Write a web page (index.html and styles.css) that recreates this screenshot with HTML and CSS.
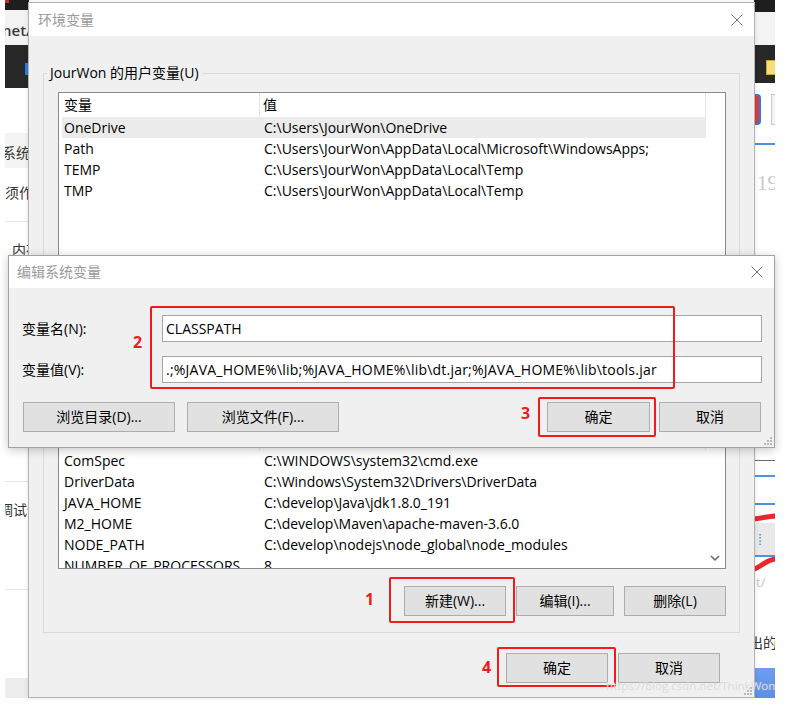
FILE: index.html
```html
<!DOCTYPE html>
<html lang="zh-CN">
<head>
<meta charset="utf-8">
<title>环境变量</title>
<link rel="stylesheet" href="styles.css">
</head>
<body>
<div class="desk">

  <!-- background web page fragments -->
  <div class="strip strip-left">
    <div class="sb dark h10"><i class="tick-red"></i></div>
    <div class="sb light h35"><span class="ftxt pt11 net">net/</span></div>
    <div class="sb dark2 h43"><i class="tick-blue"></i></div>
    <div class="sb h45"></div>
    <div class="sb band h35"><span class="ftxt pt11 sh-2">系统信</span></div>
    <div class="sb h54 rule"><span class="ftxt pt16">须作</span></div>
    <div class="sb h260 rule"><span class="ftxt pt19 sh7">内存</span></div>
    <div class="sb h108 rule"><span class="ftxt pt19 sh-6">调试信</span></div>
    <div class="sb h88"></div>
    <div class="sb band2 h20"></div>
  </div>

  <div class="strip strip-right">
    <div class="sb dark h12"></div>
    <div class="sb light h33"></div>
    <div class="sb dark2 h38"><i class="tick-yellow"></i></div>
    <div class="sb h60 tools"><i class="tool-red"></i><i class="tool-gray"></i></div>
    <div class="sb line-blue"></div>
    <div class="sb h315"><span class="ftxt num19">19</span></div>
    <div class="sb line-dark"></div>
    <div class="sb h14"></div>
    <div class="sb line-blue"></div>
    <div class="sb h26"></div>
    <div class="sb line-blue"></div>
    <div class="sb h18 scrib">
      <svg width="21" height="18" viewBox="0 0 21 18"><path d="M0 14 C6 13 12 12 21 11" stroke="#e8262b" stroke-width="5" fill="none" stroke-linecap="round"/></svg>
    </div>
    <div class="sb h32 graybox"><span class="blue-dots">⁞</span></div>
    <div class="sb line-blue"></div>
    <div class="sb h33 scrib">
      <svg width="21" height="16" viewBox="0 0 21 16"><path d="M0 12 C6 11 10 4 21 2" stroke="#e8262b" stroke-width="5" fill="none" stroke-linecap="round"/></svg>
      <span class="faint">t/</span>
    </div>
    <div class="sb h78"><span class="ftxt pt44 sh-5">出的</span></div>
    <div class="sb bluebar h30"></div>
  </div>

  <!-- 环境变量 window -->
  <section class="win win-env">
    <header class="titlebar">
      <span class="title">环境变量</span>
      <svg class="xbtn" width="12" height="12" viewBox="0 0 12 12"><path d="M0.5 0.5L11.5 11.5M11.5 0.5L0.5 11.5" stroke="#767676" stroke-width="1" fill="none"/></svg>
    </header>
    <div class="win-body env-body">
      <fieldset class="group">
        <legend>JourWon 的用户变量(U)</legend>
        <div class="group-in">
          <div class="listview user-list">
            <div class="lv-cols">
              <div class="lv-head"><span class="c1">变量</span><span class="c2">值</span></div>
              <div class="lv-row sel"><span class="c1">OneDrive</span><span class="c2">C:\Users\JourWon\OneDrive</span></div>
              <div class="lv-row"><span class="c1">Path</span><span class="c2">C:\Users\JourWon\AppData\Local\Microsoft\WindowsApps;</span></div>
              <div class="lv-row"><span class="c1">TEMP</span><span class="c2">C:\Users\JourWon\AppData\Local\Temp</span></div>
              <div class="lv-row"><span class="c1">TMP</span><span class="c2">C:\Users\JourWon\AppData\Local\Temp</span></div>
            </div>
            <div class="vscroll"></div>
          </div>
          <div class="btn-row">
            <button class="btn w102">新建(N)...</button>
            <button class="btn w98">编辑(E)...</button>
            <button class="btn w102">删除(D)</button>
          </div>
        </div>
      </fieldset>

      <fieldset class="group sys-group">
        <legend>系统变量(S)</legend>
        <div class="group-in">
          <div class="listview sys-list">
            <div class="lv-cols">
              <div class="lv-head"><span class="c1">变量</span><span class="c2">值</span></div>
              <div class="lv-row"><span class="c1">ComSpec</span><span class="c2">C:\WINDOWS\system32\cmd.exe</span></div>
              <div class="lv-row"><span class="c1">DriverData</span><span class="c2">C:\Windows\System32\Drivers\DriverData</span></div>
              <div class="lv-row"><span class="c1">JAVA_HOME</span><span class="c2">C:\develop\Java\jdk1.8.0_191</span></div>
              <div class="lv-row"><span class="c1">M2_HOME</span><span class="c2">C:\develop\Maven\apache-maven-3.6.0</span></div>
              <div class="lv-row"><span class="c1">NODE_PATH</span><span class="c2">C:\develop\nodejs\node_global\node_modules</span></div>
              <div class="lv-row"><span class="c1">NUMBER_OF_PROCESSORS</span><span class="c2">8</span></div>
            </div>
            <div class="vscroll">
              <svg width="10" height="6" viewBox="0 0 10 6"><path d="M1 1L5 5L9 1" stroke="#5f5f5f" stroke-width="1.4" fill="none"/></svg>
            </div>
          </div>
          <div class="btn-row">
            <button class="btn w102">新建(W)...</button>
            <button class="btn w98 ml13">编辑(I)...</button>
            <button class="btn w102">删除(L)</button>
          </div>
        </div>
      </fieldset>

      <div class="btn-row foot">
        <button class="btn w102">确定</button>
        <button class="btn w102">取消</button>
      </div>
    </div>
    <svg class="grip" width="8" height="8" viewBox="0 0 8 8" fill="#b9b9b9"><rect x="6" y="0" width="2" height="2"/><rect x="3" y="3" width="2" height="2"/><rect x="6" y="3" width="2" height="2"/><rect x="0" y="6" width="2" height="2"/><rect x="3" y="6" width="2" height="2"/><rect x="6" y="6" width="2" height="2"/></svg>
  </section>

  <!-- 编辑系统变量 dialog -->
  <section class="win win-edit">
    <header class="titlebar">
      <span class="title">编辑系统变量</span>
      <svg class="xbtn" width="12" height="12" viewBox="0 0 12 12"><path d="M0.5 0.5L11.5 11.5M11.5 0.5L0.5 11.5" stroke="#767676" stroke-width="1" fill="none"/></svg>
    </header>
    <div class="win-body edit-body">
      <div class="field-grid">
        <label class="flabel">变量名(N):</label>
        <div class="input">CLASSPATH</div>
        <label class="flabel">变量值(V):</label>
        <div class="input wide">.;%JAVA_HOME%\lib;%JAVA_HOME%\lib\dt.jar;%JAVA_HOME%\lib\tools.jar</div>
      </div>
      <div class="edit-btns">
        <button class="btn w152">浏览目录(D)...</button>
        <button class="btn w152">浏览文件(F)...</button>
        <span class="spacer"></span>
        <button class="btn w103">确定</button>
        <button class="btn w102">取消</button>
      </div>
    </div>
    <svg class="grip" width="8" height="8" viewBox="0 0 8 8" fill="#b9b9b9"><rect x="6" y="0" width="2" height="2"/><rect x="3" y="3" width="2" height="2"/><rect x="6" y="3" width="2" height="2"/><rect x="0" y="6" width="2" height="2"/><rect x="3" y="6" width="2" height="2"/><rect x="6" y="6" width="2" height="2"/></svg>
  </section>

  <!-- red annotations -->
  <div class="anno box2"></div><span class="anno-num n2">2</span>
  <div class="anno box3"></div><span class="anno-num n3">3</span>
  <div class="anno box1"></div><span class="anno-num n1">1</span>
  <div class="anno box4"></div><span class="anno-num n4">4</span>

  <span class="watermark">https://blog.csdn.net/ThinkWon</span>
</div>
</body>
</html>
```

FILE: styles.css
```css
* { box-sizing: border-box; }
html, body { margin: 0; padding: 0; background: #ffffff; }
body {
  font-family: "Open Sans", "Noto Sans CJK SC", sans-serif;
  font-size: 14px;
  color: #000;
}
.desk { position: relative; width: 790px; height: 704px; overflow: hidden; background: #fff; }

/* ---------- background page strips ---------- */
.strip { position: absolute; top: 0; display: flex; flex-direction: column; overflow: hidden; }
.strip-left { left: 5px; width: 24px; height: 698px; }
.strip-right { left: 754px; width: 21px; height: 698px; }
.sb { flex: none; display: flex; align-items: flex-start; overflow: hidden; white-space: nowrap; }
.h10 { height: 10px; } .h12 { height: 12px; } .h14 { height: 14px; } .h18 { height: 18px; }
.h20 { height: 20px; } .h26 { height: 26px; } .h30 { height: 30px; } .h32 { height: 32px; }
.h33 { height: 33px; } .h35 { height: 35px; } .h38 { height: 38px; } .h43 { height: 43px; }
.h45 { height: 45px; } .h54 { height: 54px; } .h60 { height: 60px; } .h78 { height: 78px; }
.h88 { height: 88px; } .h108 { height: 108px; } .h260 { height: 260px; } .h315 { height: 315px; }
.dark { background: #1e1e1e; }
.dark2 { background: #282828; }
.light { background: #f3f3f3; }
.band { background: #f4f4f4; }
.band2 { background: #ededed; }
.rule { border-bottom: 1px solid #e6e6e6; }
.ftxt { display: block; line-height: 18px; font-size: 14px; color: #333; }
.pt11 { padding-top: 11px; } .pt16 { padding-top: 16px; } .pt19 { padding-top: 19px; } .pt44 { padding-top: 44px; }
.sh-2 { margin-left: -3px; } .sh7 { margin-left: 7px; } .sh-6 { margin-left: -6px; } .sh-5 { margin-left: -5px; }
.net { font-size: 15px; font-weight: 600; color: #3a3a3a; margin-left: -3px; }
.tick-red { display: block; width: 4px; height: 3px; background: #c0302a; }
.tick-blue { display: block; width: 4px; height: 12px; margin: 18px 0 0 20px; background: #2f7de1; }
.tick-yellow { display: block; width: 9px; height: 15px; margin: 15px 0 0 12px; background: #f7de7a; border: 1px solid #c9a532; border-right: none; }
.tools { background: #fff; }
.tool-red { display: block; width: 8px; height: 31px; margin-top: 11px; background: #e03a3a; border: 2px solid #2c7be0; border-left: none; border-radius: 0 4px 4px 0; }
.tool-gray { display: block; width: 4px; height: 31px; margin: 11px 0 0 10px; background: #f3f3f3; border: 1px solid #c8c8c8; border-right: none; }
.line-blue { height: 2px; background: #4b93e0; }
.line-dark { height: 1px; background: #6a6a6a; }
.num19 { font-family: "Liberation Serif", serif; font-size: 21px; line-height: 22px; color: #c9c9c9; padding-top: 27px; margin-left: 3px; }
.scrib { align-items: flex-start; flex-direction: column; }
.graybox { background: #e9e9e9; align-items: center; }
.blue-dots { color: #3b7fd6; font-size: 14px; margin-left: 4px; }
.faint { font-size: 13px; color: #c4c4c4; line-height: 14px; margin-top: 2px; margin-left: 2px; }
.bluebar { background: linear-gradient(#6e9ef0, #5f8fe4); }

/* ---------- windows ---------- */
.win { position: absolute; display: flex; flex-direction: column; background: #f0f0f0; }
.win-env { left: 28px; top: 2px; width: 727px; height: 696px; border: 1px solid #b4b4b4; z-index: 1; box-shadow: 0 0 4px rgba(0,0,0,0.12); }
.win-edit { left: 8px; top: 255px; width: 767px; height: 193px; border: 1px solid #a2a2a2; z-index: 2; box-shadow: 0 2px 9px rgba(0,0,0,0.22); }
.titlebar { flex: none; display: flex; align-items: center; justify-content: space-between; background: #fff; }
.win-env .titlebar { height: 33px; padding: 0 11px 0 9px; }
.win-edit .titlebar { height: 32px; padding: 0 11px 0 8px; }
.title { color: #9a9a9a; font-size: 14px; line-height: 18px; }
.xbtn { display: block; }
.win-body { flex: 1; display: flex; flex-direction: column; }
.grip { position: absolute; right: 2px; bottom: 2px; }

/* env window body */
.env-body { padding: 28px 14px 0 14px; }
.group { margin: 0; padding: 0; border: 1px solid #dadada; min-width: 0; }
.group legend { margin-left: 3px; padding: 0 3px; font-size: 14px; line-height: 18px; color: #000; }
.group-in { padding: 10px 13px 16px 14px; }
.sys-group { margin-top: 8px; }
.listview { display: flex; background: #fff; border: 1px solid #868a91; padding-left: 3px; overflow: hidden; }
.user-list { height: 232px; }
.sys-list { height: 144px; }
.lv-cols { width: 644px; flex: none; }
.lv-head, .lv-row { display: flex; white-space: nowrap; }
.lv-head { height: 24px; line-height: 24px; }
.lv-row { height: 21px; line-height: 21px; }
.lv-head .c1, .lv-row .c1 { width: 198px; flex: none; padding-left: 2px; overflow: hidden; }
.lv-head .c1 { border-right: 1px solid #e5e5e5; }
.lv-head .c2 { flex: 1; padding-left: 3px; border-right: 1px solid #e5e5e5; }
.lv-row .c2 { flex: 1; padding-left: 4px; }
.lv-row.sel { background: #ebebeb; }
.vscroll { flex: 1; display: flex; flex-direction: column; justify-content: flex-end; align-items: center; padding-bottom: 7px; }
.vscroll svg { display: block; margin-left: -1px; }

.btn-row { display: flex; justify-content: flex-end; gap: 10px; margin-top: 17px; }
.user-list + .btn-row { margin-top: 18px; }
.ml13 { margin-left: 3px; }
.foot { margin-top: 20px; margin-right: 20px; }

.btn {
  flex: none; height: 30px; padding: 0; margin: 0;
  background: #e1e1e1; border: 1px solid #adadad; border-radius: 0;
  font-family: "Open Sans", "Noto Sans CJK SC", sans-serif; font-size: 14px; color: #000;
  line-height: 28px; text-align: center;
}
.w98 { width: 98px; } .w102 { width: 102px; } .w103 { width: 103px; } .w152 { width: 152px; }

/* edit dialog body */
.edit-body { padding: 27px 12px 0 14px; }
.field-grid { display: grid; grid-template-columns: 139px 600px; row-gap: 14px; align-items: center; }
.flabel { font-size: 14px; line-height: 18px; margin-left: -1px; }
.input { height: 27px; background: #fff; border: 1px solid #a6a6a6; padding-left: 3px; line-height: 25px; white-space: nowrap; overflow: hidden; }
.input.wide { letter-spacing: 0.22px; }
.edit-btns { display: flex; gap: 12px; margin-top: 19px; padding-right: 1px; }
.edit-btns .spacer { flex: 1; }
.edit-btns .w103 + .w102 { margin-left: -3px; }

/* ---------- annotations ---------- */
.anno { position: absolute; border: 2px solid #f21b1b; border-radius: 2px; z-index: 3; }
.box2 { left: 150px; top: 306px; width: 525px; height: 83px; }
.box3 { left: 538px; top: 397px; width: 118px; height: 40px; }
.box1 { left: 389px; top: 577px; width: 126px; height: 46px; }
.box4 { left: 497px; top: 647px; width: 119px; height: 40px; }
.anno-num { position: absolute; z-index: 3; color: #f21b1b; font-family: "Open Sans", sans-serif; font-weight: 700; font-size: 16px; line-height: 20px; }
.n2 { left: 133px; top: 332px; }
.n3 { left: 521px; top: 403px; }
.n1 { left: 365px; top: 589px; }
.n4 { left: 482px; top: 657px; }

.watermark {
  position: absolute; left: 606px; top: 677px; z-index: 4;
  font-family: "Open Sans", sans-serif; font-size: 11.5px; line-height: 18px;
  color: rgba(212,212,212,0.9); text-shadow: 0 0 1px rgba(255,255,255,0.6);
  white-space: nowrap;
}
```
